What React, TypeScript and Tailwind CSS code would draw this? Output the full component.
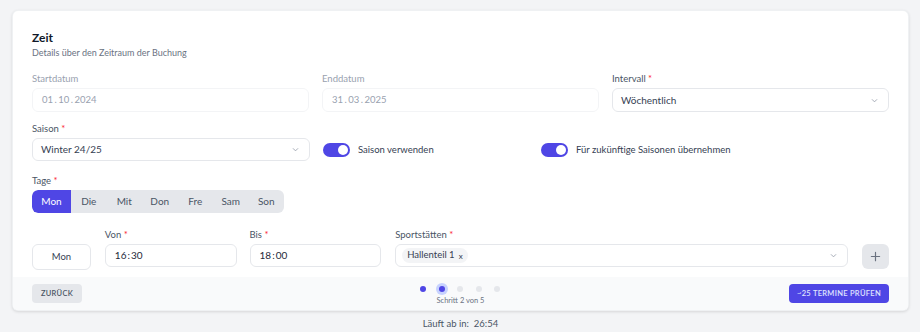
import React from "react";

const font = { fontFamily: "Lato, 'Noto Sans', sans-serif" };

function Chevron() {
  return (
    <svg width="9" height="9" viewBox="0 0 20 20" fill="none" stroke="#9ca3af" strokeWidth="2" strokeLinecap="round" strokeLinejoin="round">
      <path d="M5 8l5 5 5-5" />
    </svg>
  );
}

function Label({ children, req }: { children: React.ReactNode; req?: boolean }) {
  return (
    <div className="text-[9.5px] leading-[12px] text-gray-600 mb-[3px]">
      {children}
      {req && <span className="text-red-500"> *</span>}
    </div>
  );
}

function Toggle() {
  return (
    <div className="w-[27px] h-[14px] rounded-full bg-[#4f46e5] flex items-center justify-end px-[2px]">
      <div className="w-[10px] h-[10px] rounded-full bg-white" />
    </div>
  );
}

function Sep({ c }: { c: string }) {
  return <span className="mx-[1.5px]">{c}</span>;
}

export default function App() {
  const days = ["Mon", "Die", "Mit", "Don", "Fre", "Sam", "Son"];
  return (
    <div className="w-[920px] h-[332px] bg-[#f3f4f6] pt-[10px] pl-[12px] pr-[11px] overflow-hidden" style={font}>
      <div className="bg-white rounded-md shadow-[0_1px_3px_rgba(0,0,0,0.12)] border border-gray-200/60 overflow-hidden">
        <div className="h-[266px] overflow-hidden px-[19px] pt-[19px]">
          <div className="text-[12px] leading-[16px] font-bold text-gray-900">Zeit</div>
          <div className="text-[9px] leading-[14px] text-gray-500">Details über den Zeitraum der Buchung</div>

          <div className="grid grid-cols-3 gap-x-[13px] mt-[13px]">
            <div>
              <div className="text-[9.5px] leading-[12px] text-gray-400 mb-[3px]">Startdatum</div>
              <div className="h-[24px] rounded-md border border-gray-100 flex items-center px-[9px] text-[9.5px] text-gray-400">
                01<Sep c="." />10<Sep c="." />2024
              </div>
            </div>
            <div>
              <div className="text-[9.5px] leading-[12px] text-gray-400 mb-[3px]">Enddatum</div>
              <div className="h-[24px] rounded-md border border-gray-100 flex items-center px-[9px] text-[9.5px] text-gray-400">
                31<Sep c="." />03<Sep c="." />2025
              </div>
            </div>
            <div>
              <Label req>Intervall</Label>
              <div className="h-[24px] rounded-md border border-gray-200 flex items-center justify-between pl-[8px] pr-[9px] text-[10px] text-gray-700">
                <span>Wöchentlich</span>
                <Chevron />
              </div>
            </div>
          </div>

          <div className="flex mt-[11px]">
            <div className="w-[278px]">
              <Label req>Saison</Label>
              <div className="h-[23px] rounded-md border border-gray-200 flex items-center justify-between pl-[8px] pr-[9px] text-[10px] text-gray-700">
                <span>Winter 24/25</span>
                <Chevron />
              </div>
            </div>
            <div className="flex items-end pb-[4px] ml-[13px]">
              <div className="flex items-center gap-[8px] w-[218px]">
                <Toggle />
                <span className="text-[9.5px] text-gray-700">Saison verwenden</span>
              </div>
              <div className="flex items-center gap-[8px]">
                <Toggle />
                <span className="text-[9.5px] text-gray-700">Für zukünftige Saisonen übernehmen</span>
              </div>
            </div>
          </div>

          <div className="mt-[14px]">
            <Label req>Tage</Label>
            <div className="flex w-fit h-[23px] rounded-md bg-[#e5e7eb] overflow-hidden">
              {days.map((d, i) => (
                <div
                  key={d}
                  className={
                    i === 0
                      ? "w-[39px] flex items-center justify-center text-[10px] bg-[#4f46e5] text-white rounded-l-md"
                      : "w-[35.5px] flex items-center justify-center text-[10px] text-gray-600"
                  }
                >
                  {d}
                </div>
              ))}
            </div>
          </div>

          <div className="flex items-start mt-[16px]">
            <div className="w-[59px] h-[26px] mt-[15px] rounded-md border border-gray-200 flex items-center justify-center text-[9.5px] text-gray-700">
              Mon
            </div>
            <div className="w-[132px] ml-[14px]">
              <Label req>Von</Label>
              <div className="h-[23px] rounded-md border border-gray-200 flex items-center px-[9px] text-[10px] text-gray-800">
                16<span className="mx-[1px]">:</span>30
              </div>
            </div>
            <div className="w-[132px] ml-[13px]">
              <Label req>Bis</Label>
              <div className="h-[23px] rounded-md border border-gray-200 flex items-center px-[9px] text-[10px] text-gray-800">
                18<span className="mx-[1px]">:</span>00
              </div>
            </div>
            <div className="w-[454px] ml-[14px]">
              <Label req>Sportstätten</Label>
              <div className="h-[23px] rounded-md border border-gray-200 flex items-center justify-between pl-[6px] pr-[9px]">
                <span className="bg-gray-100 rounded-full px-[5px] h-[15px] flex items-center text-[9.5px] text-gray-700">
                  Hallenteil 1 <span className="ml-[4px] text-[8px]">x</span>
                </span>
                <Chevron />
              </div>
            </div>
            <div className="w-[27px] h-[25px] mt-[15px] ml-[14px] rounded-md bg-[#e5e7eb] flex items-center justify-center">
              <svg width="11" height="11" viewBox="0 0 12 12" stroke="#6b7280" strokeWidth="1.3" strokeLinecap="round">
                <path d="M6 1.5v9M1.5 6h9" />
              </svg>
            </div>
          </div>
        </div>

        <div className="h-[33px] bg-[#f9fafb] grid grid-cols-3 items-center px-[19px]">
          <div className="justify-self-start h-[19px] w-[50px] rounded bg-[#e5e7eb] flex items-center justify-center text-[7.5px] font-semibold text-gray-600 tracking-[0.3px]">
            ZURÜCK
          </div>
          <div className="justify-self-center flex flex-col items-center pt-[2px]">
            <div className="flex items-center gap-[12.5px] h-[12px]">
              <div className="w-[6px] h-[6px] rounded-full bg-[#4f46e5]" />
              <div className="w-[6px] h-[6px] rounded-full bg-[#4f46e5] ring-[3px] ring-[#c7d2fe]" />
              <div className="w-[6px] h-[6px] rounded-full bg-[#e5e7eb]" />
              <div className="w-[6px] h-[6px] rounded-full bg-[#e5e7eb]" />
              <div className="w-[6px] h-[6px] rounded-full bg-[#e5e7eb]" />
            </div>
            <div className="text-[7.5px] leading-[10px] text-gray-500 mt-[1px]">Schritt 2 von 5</div>
          </div>
          <div className="justify-self-end h-[19px] w-[100px] rounded bg-[#4f46e5] flex items-center justify-center text-[7.5px] font-semibold text-indigo-100 tracking-[0.3px]">
            ~25 TERMINE PRÜFEN
          </div>
        </div>
      </div>
      <div className="text-center text-[9.5px] text-gray-600 mt-[6px]">
        Läuft ab in:&nbsp; 26:54
      </div>
    </div>
  );
}
